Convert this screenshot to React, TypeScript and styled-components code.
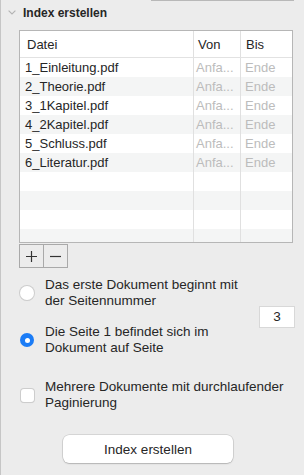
import styled, { createGlobalStyle } from 'styled-components';

const GlobalStyle = createGlobalStyle`
  html, body {
    margin: 0;
    padding: 0;
    background: #ececec;
  }
  body {
    font-family: 'Liberation Sans', Arial, sans-serif;
    color: #262626;
  }
`;

const Panel = styled.div`
  border-left: 1px solid #c6c6c6;
  box-sizing: border-box;
  display: flex;
  flex-direction: column;
  height: 475px;
  width: 296px;
`;

const TopRule = styled.div`
  background: #b8b8b8;
  height: 1px;
  margin-left: 150px;
  width: 143px;
`;

const Header = styled.div`
  align-items: center;
  display: flex;
  gap: 7px;
  height: 23px;
  padding-left: 7px;
`;

const Title = styled.span`
  font-size: 12px;
  font-weight: bold;
`;

const TableBox = styled.div`
  background: #fff;
  border: 1px solid #b6b6b6;
  margin: 6px 0 0 18px;
  width: 272px;
`;

const Row = styled.div<{ $head?: boolean; $stripe?: boolean }>`
  background: ${(p) => (p.$stripe ? '#f4f5f5' : '#fff')};
  border-bottom: ${(p) => (p.$head ? '1px solid #e2e2e2' : 'none')};
  display: flex;
  height: ${(p) => (p.$head ? '26px' : '19px')};
`;

const Cell = styled.div<{ $w?: number; $pad: number; $muted?: boolean; $last?: boolean }>`
  align-items: center;
  border-right: ${(p) => (p.$last ? 'none' : '1px solid #e0e0e0')};
  box-sizing: border-box;
  color: ${(p) => (p.$muted ? '#bcbcbc' : '#262626')};
  display: flex;
  flex: ${(p) => (p.$w ? `0 0 ${p.$w}px` : '1')};
  font-size: 13px;
  overflow: hidden;
  padding-left: ${(p) => p.$pad}px;
  white-space: nowrap;
`;

const Body = styled.div`
  height: 184px;
  overflow: hidden;
`;

const PlusMinus = styled.div`
  display: flex;
  margin: 1px 0 0 18px;
`;

const SmallButton = styled.button`
  align-items: center;
  background: #ececec;
  border: 1px solid #a9a9a9;
  box-sizing: border-box;
  display: flex;
  height: 24px;
  justify-content: center;
  padding: 0;
  width: 25px;
  & + & {
    border-left: none;
    width: 24px;
  }
`;

const Options = styled.div`
  align-items: center;
  display: flex;
  margin: 9px 0 0 19px;
  width: 275px;
`;

const OptionList = styled.div`
  display: flex;
  flex: 1;
  flex-direction: column;
  gap: 15px;
`;

const Choice = styled.label`
  align-items: center;
  display: flex;
  gap: 11px;
`;

const Label = styled.span`
  font-size: 13.5px;
  line-height: 16px;
`;

const Radio = styled.span<{ $on?: boolean }>`
  background: ${(p) => (p.$on ? '#1b7cf6' : '#fff')};
  border-radius: 50%;
  box-shadow: ${(p) => (p.$on ? 'none' : '0 0 0 1px #cdcdcd, 0 1px 1px rgba(0,0,0,0.08)')};
  box-sizing: border-box;
  flex: 0 0 14px;
  height: 14px;
  position: relative;
  &::after {
    background: #fff;
    border-radius: 50%;
    content: '';
    display: ${(p) => (p.$on ? 'block' : 'none')};
    height: 5px;
    left: 4.5px;
    position: absolute;
    top: 4.5px;
    width: 5px;
  }
`;

const NumberField = styled.div`
  align-items: center;
  background: #fff;
  border: 1px solid #d8d8d8;
  box-sizing: border-box;
  display: flex;
  font-size: 13.5px;
  height: 22px;
  justify-content: center;
  width: 36px;
`;

const CheckRow = styled(Choice)`
  margin: 23px 0 0 20px;
`;

const Checkbox = styled.span`
  background: #fff;
  border-radius: 3px;
  box-shadow: 0 0 0 1px #cdcdcd, 0 1px 1px rgba(0,0,0,0.08);
  flex: 0 0 13px;
  height: 13px;
`;

const Footer = styled.div`
  display: flex;
  justify-content: center;
  margin-top: 24px;
  width: 294px;
`;

const MainButton = styled.button`
  background: #fff;
  border: none;
  border-radius: 6px;
  box-shadow: 0 0 0 0.5px rgba(0, 0, 0, 0.18), 0 1px 1.5px rgba(0, 0, 0, 0.16);
  color: #262626;
  font-family: inherit;
  font-size: 13.5px;
  height: 28px;
  width: 170px;
`;

const files = [
  '1_Einleitung.pdf',
  '2_Theorie.pdf',
  '3_1Kapitel.pdf',
  '4_2Kapitel.pdf',
  '5_Schluss.pdf',
  '6_Literatur.pdf',
];

function Chevron() {
  return (
    <svg width="8" height="5" viewBox="0 0 8 5">
      <path d="M0.6 0.6 L4 4 L7.4 0.6" fill="none" stroke="#b3b3b3" strokeWidth="1.1" />
    </svg>
  );
}

function App() {
  const rows = Array.from({ length: 10 }, (_, i) => files[i]);

  return (
    <Panel>
      <GlobalStyle />
      <TopRule />
      <Header>
        <Chevron />
        <Title>Index erstellen</Title>
      </Header>
      <TableBox>
        <Row $head>
          <Cell $w={174} $pad={7}>Datei</Cell>
          <Cell $w={47} $pad={4}>Von</Cell>
          <Cell $pad={5} $last>Bis</Cell>
        </Row>
        <Body>
          {rows.map((name, i) => (
            <Row key={i} $stripe={i % 2 === 1}>
              <Cell $w={174} $pad={5}>{name}</Cell>
              <Cell $w={47} $pad={2} $muted>{name ? 'Anfa...' : ''}</Cell>
              <Cell $pad={4} $muted $last>{name ? 'Ende' : ''}</Cell>
            </Row>
          ))}
        </Body>
      </TableBox>
      <PlusMinus>
        <SmallButton>
          <svg width="11" height="11" viewBox="0 0 11 11">
            <path d="M5.5 0 V11 M0 5.5 H11" stroke="#333" strokeWidth="1.2" />
          </svg>
        </SmallButton>
        <SmallButton>
          <svg width="11" height="11" viewBox="0 0 11 11">
            <path d="M0 5.5 H11" stroke="#333" strokeWidth="1.2" />
          </svg>
        </SmallButton>
      </PlusMinus>
      <Options>
        <OptionList>
          <Choice>
            <Radio />
            <Label>Das erste Dokument beginnt mit<br />der Seitennummer</Label>
          </Choice>
          <Choice>
            <Radio $on />
            <Label>Die Seite 1 befindet sich im<br />Dokument auf Seite</Label>
          </Choice>
        </OptionList>
        <NumberField>3</NumberField>
      </Options>
      <CheckRow>
        <Checkbox />
        <Label>Mehrere Dokumente mit durchlaufender<br />Paginierung</Label>
      </CheckRow>
      <Footer>
        <MainButton>Index erstellen</MainButton>
      </Footer>
    </Panel>
  );
}

export default App;
